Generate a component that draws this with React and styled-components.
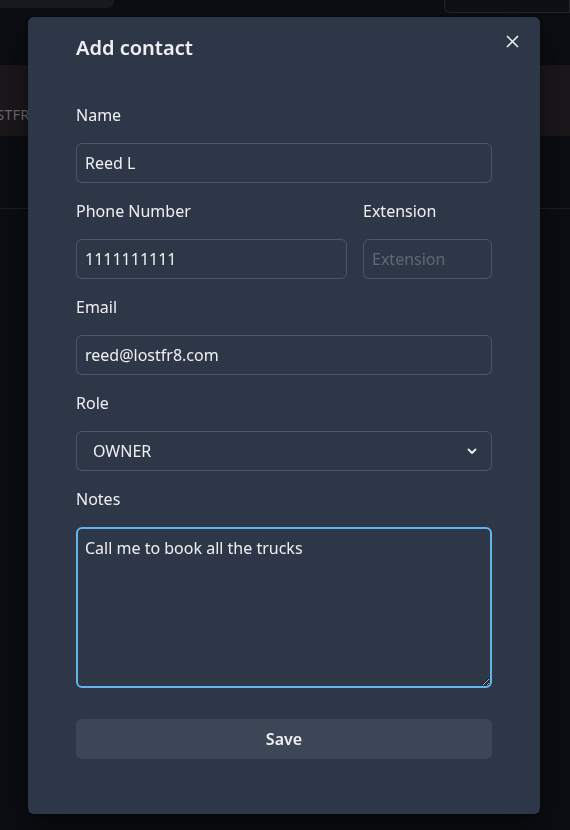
import { useEffect, useRef } from "react";
import styled, { createGlobalStyle } from "styled-components";

const GlobalStyle = createGlobalStyle`
  * { box-sizing: border-box; }
  html, body { margin: 0; padding: 0; background: #0b0d12; }
  body {
    font-family: "Noto Sans", "Open Sans", sans-serif;
    color: rgba(255, 255, 255, 0.92);
    overflow: hidden;
  }
`;

const Page = styled.div`
  height: 830px;
  display: flex;
  flex-direction: column;
  background: #0b0d12;
`;

const TopBar = styled.div`
  height: 65px;
  display: flex;
  justify-content: space-between;
  align-items: flex-start;
`;

const TabStub = styled.div`
  width: 114px;
  height: 8px;
  background: #171a21;
  border-bottom-right-radius: 6px;
`;

const SearchStub = styled.div`
  width: 126px;
  height: 13px;
  border: 1px solid #22262e;
  border-top: none;
  border-bottom-left-radius: 6px;
  background: #0e1015;
`;

const Banner = styled.div`
  height: 71px;
  background: #1b171b;
  display: flex;
  align-items: center;
  padding-top: 26px;
  color: #6d6a70;
  font-size: 15px;
`;

const BannerText = styled.span`
  margin-left: -4px;
`;

const Row = styled.div`
  height: 73px;
  border-bottom: 1px solid #1b1e25;
`;

const Overlay = styled.div`
  position: fixed;
  inset: 0;
  display: flex;
  justify-content: center;
  align-items: flex-start;
  padding-top: 17px;
`;

const Modal = styled.section`
  position: relative;
  width: 512px;
  height: 797px;
  margin-left: -2px;
  background: #2d3748;
  border-radius: 6px;
  box-shadow: 0 0 0 1px rgba(0, 0, 0, 0.1), 0 5px 10px rgba(0, 0, 0, 0.2),
    0 15px 40px rgba(0, 0, 0, 0.4);
  padding: 16px 48px 0;
`;

const Title = styled.h2`
  margin: 0;
  font-size: 20px;
  line-height: 30px;
  font-weight: 600;
  color: rgba(255, 255, 255, 0.92);
`;

const CloseButton = styled.button`
  position: absolute;
  top: 8px;
  right: 12px;
  width: 32px;
  height: 32px;
  border: none;
  background: transparent;
  color: rgba(255, 255, 255, 0.92);
  display: flex;
  align-items: center;
  justify-content: center;
  padding: 0;
  cursor: pointer;
`;

const Form = styled.form`
  display: flex;
  flex-direction: column;
  gap: 16px;
  margin-top: 40px;
`;

const Field = styled.div`
  display: flex;
  flex-direction: column;
  gap: 16px;
  min-width: 0;
`;

const PhoneRow = styled.div`
  display: grid;
  grid-template-columns: 1fr 129px;
  gap: 16px;
`;

const Label = styled.label`
  font-size: 16px;
  line-height: 24px;
  font-weight: 400;
  color: rgba(255, 255, 255, 0.92);
`;

const Input = styled.input`
  width: 100%;
  height: 40px;
  padding: 0 8px;
  border: 1px solid rgba(255, 255, 255, 0.16);
  border-radius: 6px;
  background: transparent;
  color: rgba(255, 255, 255, 0.92);
  font-family: inherit;
  font-size: 16px;
  outline: none;

  &::placeholder {
    color: rgba(255, 255, 255, 0.24);
  }
`;

const SelectWrap = styled.div`
  position: relative;
  height: 40px;
`;

const Select = styled.select`
  appearance: none;
  width: 100%;
  height: 40px;
  padding: 0 40px 0 16px;
  border: 1px solid rgba(255, 255, 255, 0.16);
  border-radius: 6px;
  background: transparent;
  color: rgba(255, 255, 255, 0.92);
  font-family: inherit;
  font-size: 16px;
  outline: none;
`;

const Chevron = styled.span`
  position: absolute;
  right: 14px;
  top: 0;
  height: 40px;
  display: flex;
  align-items: center;
  pointer-events: none;
  color: rgba(255, 255, 255, 0.92);
`;

const TextArea = styled.textarea`
  width: 100%;
  height: 161px;
  padding: 7px 7px;
  border: 2px solid #63b3ed;
  border-radius: 6px;
  background: transparent;
  color: rgba(255, 255, 255, 0.92);
  font-family: inherit;
  font-size: 16px;
  line-height: 24px;
  outline: none;
  resize: vertical;
  caret-color: #ffffff;
`;

const SaveButton = styled.button`
  margin-top: 15px;
  height: 40px;
  border: none;
  border-radius: 6px;
  background: rgba(255, 255, 255, 0.08);
  color: rgba(255, 255, 255, 0.92);
  font-family: inherit;
  font-size: 16px;
  font-weight: 600;
  cursor: pointer;
`;

const notes = "Call me to book all the trucks";

export default function App() {
  const notesRef = useRef(null);

  useEffect(() => {
    const el = notesRef.current;
    if (el) {
      el.focus();
      el.setSelectionRange(notes.length, notes.length);
    }
  }, []);

  return (
    <>
      <GlobalStyle />
      <Page>
        <TopBar>
          <TabStub />
          <SearchStub />
        </TopBar>
        <Banner>
          <BannerText>STFR8</BannerText>
        </Banner>
        <Row />
      </Page>
      <Overlay>
        <Modal>
          <Title>Add contact</Title>
          <CloseButton aria-label="Close">
            <svg width="13" height="13" viewBox="0 0 13 13">
              <path d="M1 1 L12 12 M12 1 L1 12" stroke="currentColor" strokeWidth="1.6" fill="none" />
            </svg>
          </CloseButton>
          <Form onSubmit={(e) => e.preventDefault()}>
            <Field>
              <Label>Name</Label>
              <Input defaultValue="Reed L" />
            </Field>
            <PhoneRow>
              <Field>
                <Label>Phone Number</Label>
                <Input defaultValue="1111111111" />
              </Field>
              <Field>
                <Label>Extension</Label>
                <Input placeholder="Extension" />
              </Field>
            </PhoneRow>
            <Field>
              <Label>Email</Label>
              <Input defaultValue="reed@lostfr8.com" />
            </Field>
            <Field>
              <Label>Role</Label>
              <SelectWrap>
                <Select defaultValue="OWNER">
                  <option value="OWNER">OWNER</option>
                  <option value="DISPATCHER">DISPATCHER</option>
                  <option value="DRIVER">DRIVER</option>
                </Select>
                <Chevron>
                  <svg width="12" height="12" viewBox="0 0 12 12">
                    <path d="M2.5 4.5 L6 8 L9.5 4.5" stroke="currentColor" strokeWidth="1.8" fill="none" strokeLinecap="round" strokeLinejoin="round" />
                  </svg>
                </Chevron>
              </SelectWrap>
            </Field>
            <Field>
              <Label>Notes</Label>
              <TextArea ref={notesRef} defaultValue={notes} />
            </Field>
            <SaveButton type="submit">Save</SaveButton>
          </Form>
        </Modal>
      </Overlay>
    </>
  );
}
